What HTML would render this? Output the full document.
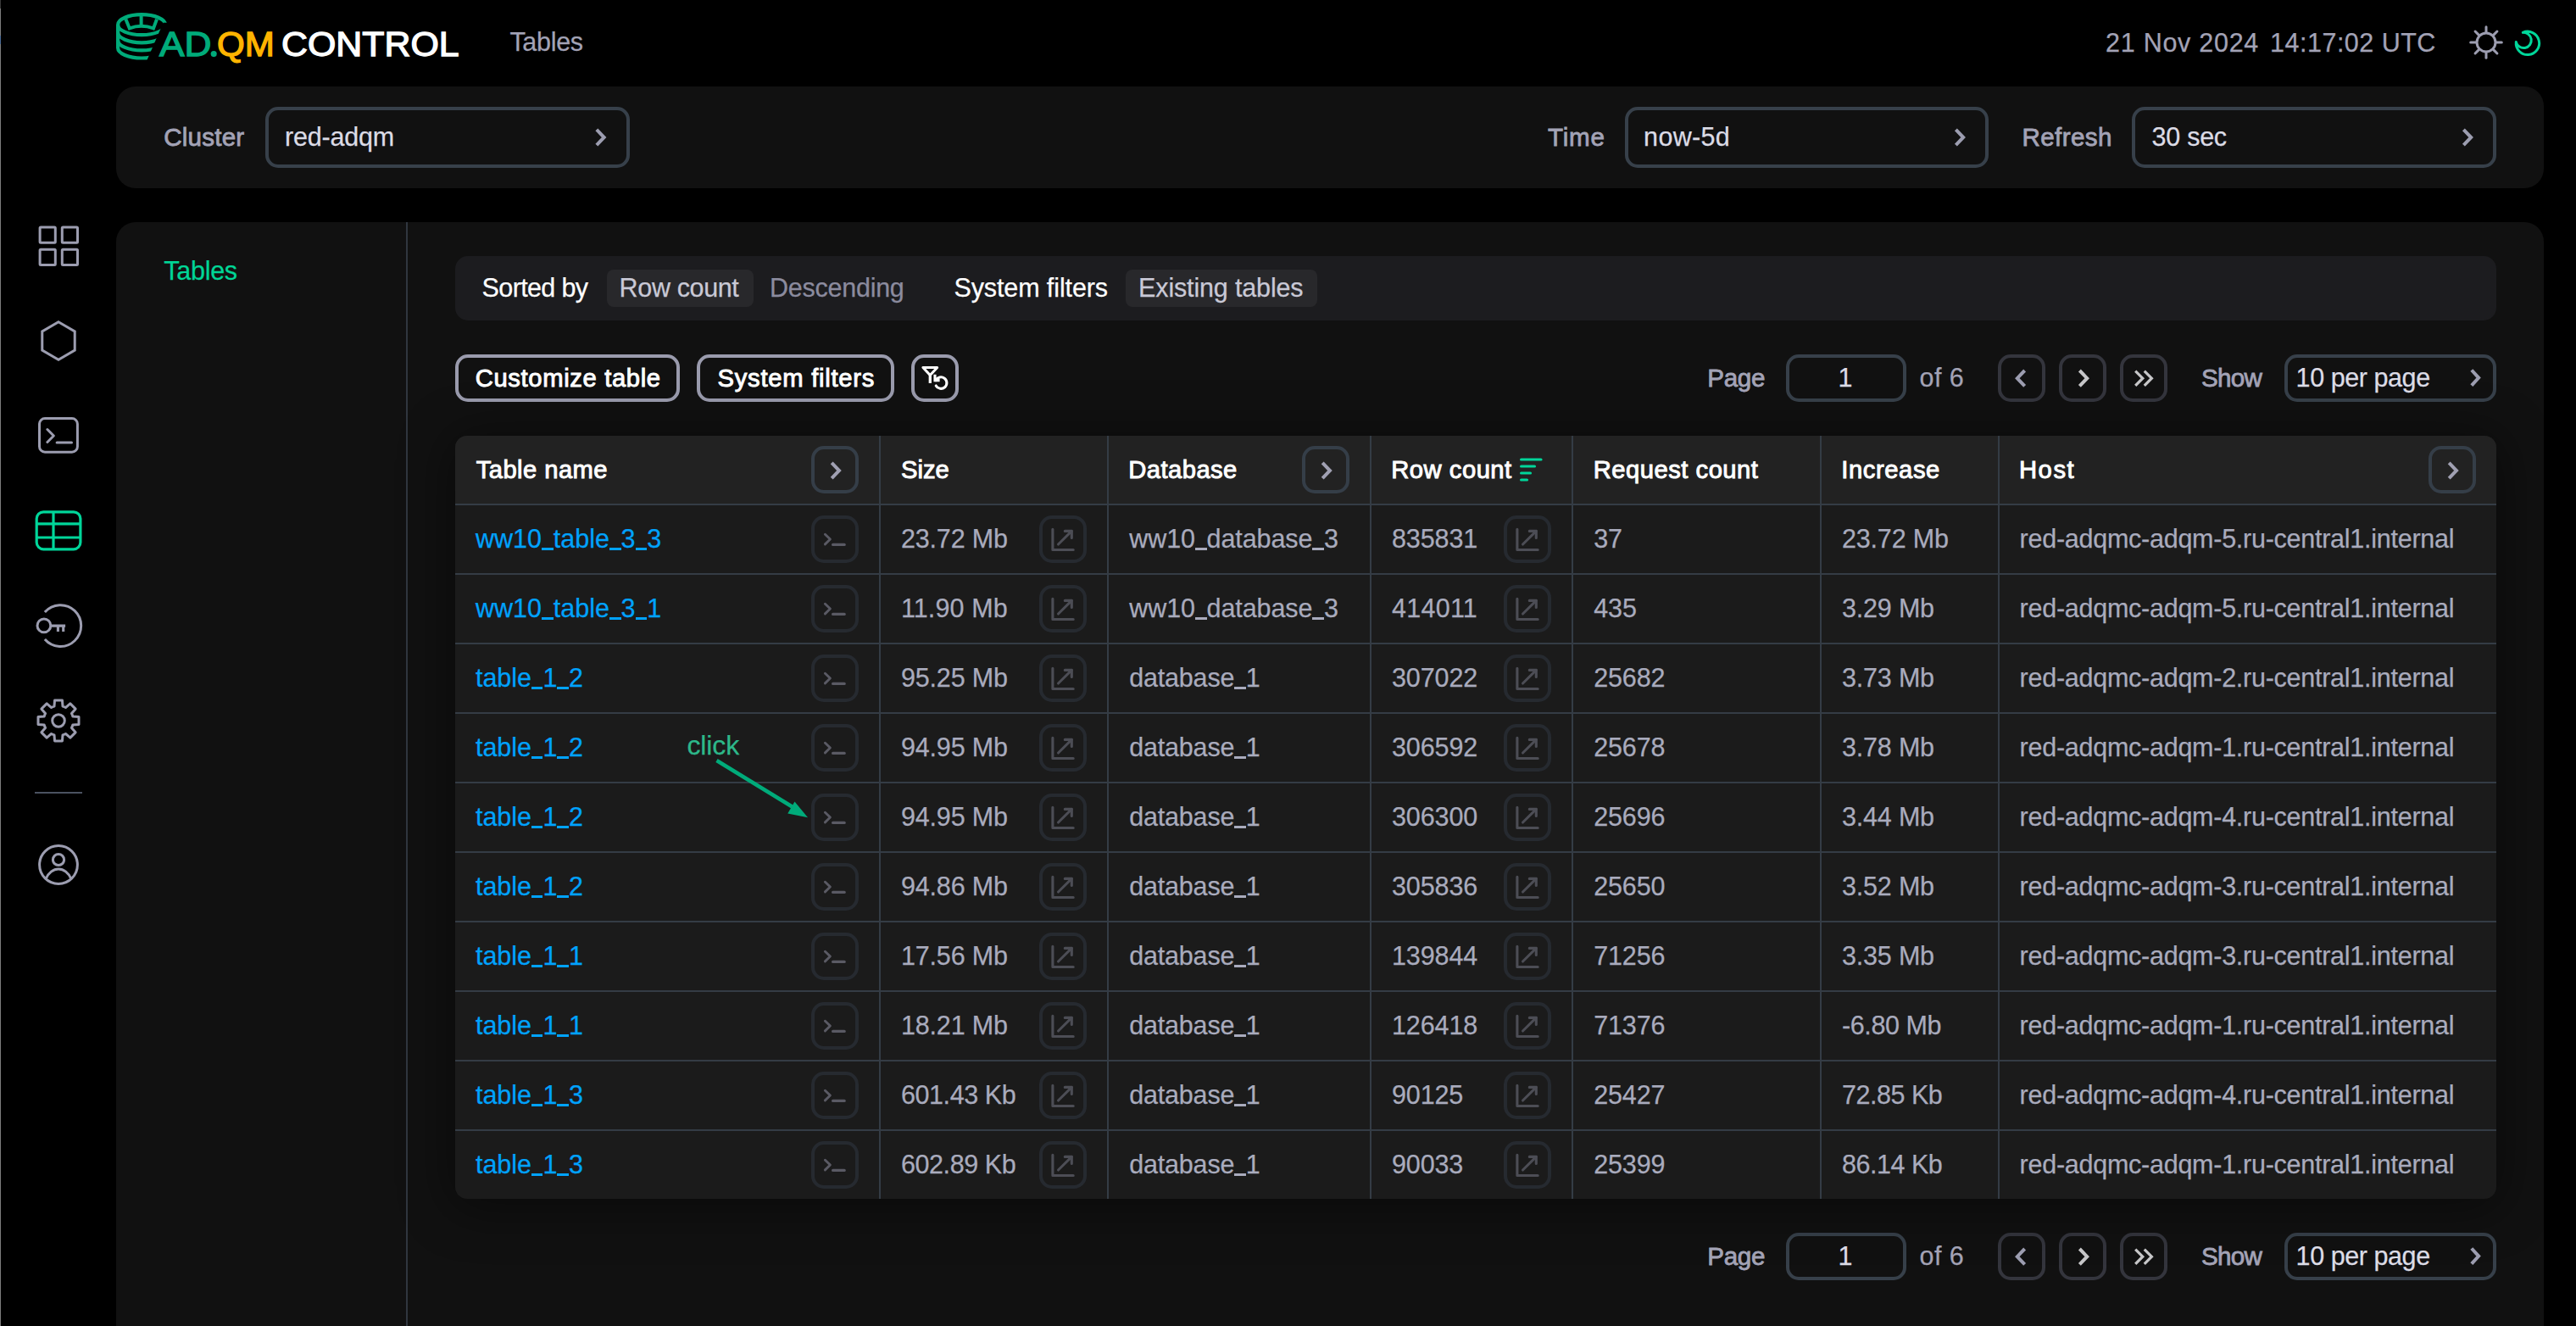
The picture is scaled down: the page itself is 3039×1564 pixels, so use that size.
<!DOCTYPE html>
<html><head><meta charset="utf-8"><title>ADQM Control - Tables</title>
<style>
html,body{margin:0;padding:0;background:#000000;overflow:hidden;}
body,#root{width:3039px;height:1564px;position:relative;overflow:hidden;font-family:"Liberation Sans", sans-serif;}
.b{position:absolute;box-sizing:border-box;}
.t{position:absolute;white-space:nowrap;line-height:40px;font-family:"Liberation Sans",sans-serif;}.u{display:inline-block;width:13.6px;height:2.3px;background:currentColor;position:relative;top:2.6px;}
svg.ic{position:absolute;left:0;top:0;}
</style></head><body><div id="root">
<div class="b" style="left:0px;top:0px;width:1px;height:10px;background:#3a3a3a;"></div>
<div class="b" style="left:0px;top:10px;width:1px;height:1554px;background:#7d7d7d;"></div>
<div class="b" style="left:0px;top:42px;width:1px;height:10px;background:#4a6a96;"></div>
<div class="b" style="left:137px;top:102px;width:2864px;height:120px;background:#111111;border-radius:23px;"></div>
<div class="b" style="left:137px;top:262px;width:2864px;height:1302px;background:#111111;border-radius:23px 23px 0 0;"></div>
<div class="b" style="left:479px;top:262px;width:2px;height:1302px;background:#30363f;"></div>
<div class="b" style="left:313px;top:126px;width:429.5px;height:72px;border-radius:15px;border:4px solid #37404a;"></div>
<div class="b" style="left:1917px;top:126px;width:429px;height:72px;border-radius:15px;border:4px solid #37404a;"></div>
<div class="b" style="left:2515px;top:126px;width:430px;height:72px;border-radius:15px;border:4px solid #37404a;"></div>
<div class="b" style="left:537px;top:302px;width:2408px;height:76px;background:#1c1c1f;border-radius:15px;"></div>
<div class="b" style="left:716.25px;top:318px;width:172.5px;height:44px;background:#28282b;border-radius:8px;"></div>
<div class="b" style="left:1328px;top:318px;width:225.75px;height:44px;background:#28282b;border-radius:8px;"></div>
<div class="b" style="left:537px;top:418px;width:265px;height:56px;border-radius:15px;border:4px solid #9a9bad;"></div>
<div class="b" style="left:822px;top:418px;width:233px;height:56px;border-radius:15px;border:4px solid #9a9bad;"></div>
<div class="b" style="left:1075px;top:418px;width:56px;height:56px;border-radius:15px;border:4px solid #9a9bad;"></div>
<div class="b" style="left:2107px;top:418px;width:142px;height:56px;border-radius:15px;border:4px solid #37404a;"></div>
<div class="b" style="left:2357px;top:418px;width:56px;height:56px;border-radius:15px;border:4px solid #34353d;"></div>
<div class="b" style="left:2429px;top:418px;width:56px;height:56px;border-radius:15px;border:4px solid #34353d;"></div>
<div class="b" style="left:2501px;top:418px;width:56px;height:56px;border-radius:15px;border:4px solid #34353d;"></div>
<div class="b" style="left:2695px;top:418px;width:250px;height:56px;border-radius:15px;border:4px solid #37404a;"></div>
<div class="b" style="left:2107px;top:1454px;width:142px;height:56px;border-radius:15px;border:4px solid #37404a;"></div>
<div class="b" style="left:2357px;top:1454px;width:56px;height:56px;border-radius:15px;border:4px solid #34353d;"></div>
<div class="b" style="left:2429px;top:1454px;width:56px;height:56px;border-radius:15px;border:4px solid #34353d;"></div>
<div class="b" style="left:2501px;top:1454px;width:56px;height:56px;border-radius:15px;border:4px solid #34353d;"></div>
<div class="b" style="left:2695px;top:1454px;width:250px;height:56px;border-radius:15px;border:4px solid #37404a;"></div>
<div class="b" style="left:537px;top:514px;width:2408px;height:900px;background:#1b1b1b;border-radius:14px;box-shadow:0 6px 60px 6px rgba(0,0,0,.42);"></div>
<div class="b" style="left:537px;top:514px;width:2408px;height:80px;background:#222222;border-radius:14px 14px 0 0;"></div>
<div class="b" style="left:537px;top:594px;width:2408px;height:2px;background:#343c45;"></div>
<div class="b" style="left:537px;top:676px;width:2408px;height:2px;background:#343c45;"></div>
<div class="b" style="left:537px;top:758px;width:2408px;height:2px;background:#343c45;"></div>
<div class="b" style="left:537px;top:840px;width:2408px;height:2px;background:#343c45;"></div>
<div class="b" style="left:537px;top:922px;width:2408px;height:2px;background:#343c45;"></div>
<div class="b" style="left:537px;top:1004px;width:2408px;height:2px;background:#343c45;"></div>
<div class="b" style="left:537px;top:1086px;width:2408px;height:2px;background:#343c45;"></div>
<div class="b" style="left:537px;top:1168px;width:2408px;height:2px;background:#343c45;"></div>
<div class="b" style="left:537px;top:1250px;width:2408px;height:2px;background:#343c45;"></div>
<div class="b" style="left:537px;top:1332px;width:2408px;height:2px;background:#343c45;"></div>
<div class="b" style="left:1037px;top:514px;width:2px;height:900px;background:#343c45;"></div>
<div class="b" style="left:1306px;top:514px;width:2px;height:900px;background:#343c45;"></div>
<div class="b" style="left:1616px;top:514px;width:2px;height:900px;background:#343c45;"></div>
<div class="b" style="left:1854px;top:514px;width:2px;height:900px;background:#343c45;"></div>
<div class="b" style="left:2147px;top:514px;width:2px;height:900px;background:#343c45;"></div>
<div class="b" style="left:2357px;top:514px;width:2px;height:900px;background:#343c45;"></div>
<div class="b" style="left:957px;top:526px;width:56px;height:56px;border-radius:15px;border:4px solid #353e48;"></div>
<div class="b" style="left:1536px;top:526px;width:56px;height:56px;border-radius:15px;border:4px solid #353e48;"></div>
<div class="b" style="left:2865px;top:526px;width:56px;height:56px;border-radius:15px;border:4px solid #353e48;"></div>
<div class="b" style="left:957px;top:608px;width:56px;height:56px;border-radius:15px;border:4px solid #262a30;"></div>
<div class="b" style="left:1226px;top:608px;width:56px;height:56px;border-radius:15px;border:4px solid #262a30;"></div>
<div class="b" style="left:1774px;top:608px;width:56px;height:56px;border-radius:15px;border:4px solid #262a30;"></div>
<div class="b" style="left:957px;top:690px;width:56px;height:56px;border-radius:15px;border:4px solid #262a30;"></div>
<div class="b" style="left:1226px;top:690px;width:56px;height:56px;border-radius:15px;border:4px solid #262a30;"></div>
<div class="b" style="left:1774px;top:690px;width:56px;height:56px;border-radius:15px;border:4px solid #262a30;"></div>
<div class="b" style="left:957px;top:772px;width:56px;height:56px;border-radius:15px;border:4px solid #262a30;"></div>
<div class="b" style="left:1226px;top:772px;width:56px;height:56px;border-radius:15px;border:4px solid #262a30;"></div>
<div class="b" style="left:1774px;top:772px;width:56px;height:56px;border-radius:15px;border:4px solid #262a30;"></div>
<div class="b" style="left:957px;top:854px;width:56px;height:56px;border-radius:15px;border:4px solid #262a30;"></div>
<div class="b" style="left:1226px;top:854px;width:56px;height:56px;border-radius:15px;border:4px solid #262a30;"></div>
<div class="b" style="left:1774px;top:854px;width:56px;height:56px;border-radius:15px;border:4px solid #262a30;"></div>
<div class="b" style="left:957px;top:936px;width:56px;height:56px;border-radius:15px;border:4px solid #262a30;"></div>
<div class="b" style="left:1226px;top:936px;width:56px;height:56px;border-radius:15px;border:4px solid #262a30;"></div>
<div class="b" style="left:1774px;top:936px;width:56px;height:56px;border-radius:15px;border:4px solid #262a30;"></div>
<div class="b" style="left:957px;top:1018px;width:56px;height:56px;border-radius:15px;border:4px solid #262a30;"></div>
<div class="b" style="left:1226px;top:1018px;width:56px;height:56px;border-radius:15px;border:4px solid #262a30;"></div>
<div class="b" style="left:1774px;top:1018px;width:56px;height:56px;border-radius:15px;border:4px solid #262a30;"></div>
<div class="b" style="left:957px;top:1100px;width:56px;height:56px;border-radius:15px;border:4px solid #262a30;"></div>
<div class="b" style="left:1226px;top:1100px;width:56px;height:56px;border-radius:15px;border:4px solid #262a30;"></div>
<div class="b" style="left:1774px;top:1100px;width:56px;height:56px;border-radius:15px;border:4px solid #262a30;"></div>
<div class="b" style="left:957px;top:1182px;width:56px;height:56px;border-radius:15px;border:4px solid #262a30;"></div>
<div class="b" style="left:1226px;top:1182px;width:56px;height:56px;border-radius:15px;border:4px solid #262a30;"></div>
<div class="b" style="left:1774px;top:1182px;width:56px;height:56px;border-radius:15px;border:4px solid #262a30;"></div>
<div class="b" style="left:957px;top:1264px;width:56px;height:56px;border-radius:15px;border:4px solid #262a30;"></div>
<div class="b" style="left:1226px;top:1264px;width:56px;height:56px;border-radius:15px;border:4px solid #262a30;"></div>
<div class="b" style="left:1774px;top:1264px;width:56px;height:56px;border-radius:15px;border:4px solid #262a30;"></div>
<div class="b" style="left:957px;top:1346px;width:56px;height:56px;border-radius:15px;border:4px solid #262a30;"></div>
<div class="b" style="left:1226px;top:1346px;width:56px;height:56px;border-radius:15px;border:4px solid #262a30;"></div>
<div class="b" style="left:1774px;top:1346px;width:56px;height:56px;border-radius:15px;border:4px solid #262a30;"></div>
<svg class="ic" width="3039" height="1564" viewBox="0 0 3039 1564">
<defs>
<clipPath id="lgc"><path d="M130 0H205V26.7H192.6L172 74.3H130Z"/></clipPath>
</defs>
<g fill="none" stroke="#00ab7a" stroke-width="4.2">
<g clip-path="url(#lgc)">
<ellipse cx="167.1" cy="29.2" rx="28" ry="12"/>
<path d="M139.1 38.30A28 12 0 0 0 195.1 38.30"/>
<path d="M139.1 47.40A28 12 0 0 0 195.1 47.40"/>
<path d="M139.1 29.2V56.5A28 12 0 0 0 195.1 56.5"/>
</g>
<path d="M148.3 22.6L152.8 33.4Q166.6 28.2 181 33.4L185 22.6" stroke-width="4" stroke-linejoin="miter"/>
<path d="M166.6 18.5V30.2" stroke-width="4"/>
</g>
<circle cx="252.2" cy="63.6" r="3.55" fill="#00ab7a"/>
<path d="M703.88 152.80L712.68 162.00L703.88 171.20" stroke="#9c9db0" stroke-width="4" fill="none"/>
<path d="M2307.39 152.80L2316.19 162.00L2307.39 171.20" stroke="#9c9db0" stroke-width="4" fill="none"/>
<path d="M2906.39 152.80L2915.19 162.00L2906.39 171.20" stroke="#9c9db0" stroke-width="4" fill="none"/>
<path d="M2915.84 436.50L2924.14 445.60L2915.84 454.70" stroke="#9c9db0" stroke-width="4" fill="none"/>
<path d="M2915.84 1472.50L2924.14 1481.60L2915.84 1490.70" stroke="#9c9db0" stroke-width="4" fill="none"/>
<g fill="none" stroke="#9c9db0" stroke-width="3" stroke-linecap="round">
<circle cx="2933" cy="50" r="11"/>
<path d="M2945.50 50.00L2951.30 50.00"/>
<path d="M2941.84 58.84L2945.94 62.94"/>
<path d="M2933.00 62.50L2933.00 68.30"/>
<path d="M2924.16 58.84L2920.06 62.94"/>
<path d="M2920.50 50.00L2914.70 50.00"/>
<path d="M2924.16 41.16L2920.06 37.06"/>
<path d="M2933.00 37.50L2933.00 31.70"/>
<path d="M2941.84 41.16L2945.94 37.06"/>
</g>
<path d="M2976.3 38.4A13.7 13.7 0 1 1 2968.3 49.5A9.1 9.1 0 1 0 2976.3 38.4Z" fill="none" stroke="#00d69a" stroke-width="3" stroke-linejoin="round"/>
<g fill="none" stroke="#9c9db0" stroke-width="3">
<rect x="47.1" y="268" width="18.2" height="18.2" rx="1"/>
<rect x="47.1" y="294.3" width="18.2" height="18.2" rx="1"/>
<rect x="73.3" y="268" width="18.2" height="18.2" rx="1"/>
<rect x="73.3" y="294.3" width="18.2" height="18.2" rx="1"/>
<path d="M69.00 379.80L88.23 390.90L88.23 413.10L69.00 424.20L49.77 413.10L49.77 390.90Z"/>
<rect x="46.5" y="493.6" width="44.9" height="39.6" rx="6.5"/>
<path d="M55.9 506.5L63.3 514L55.9 521.5" stroke-linecap="round" stroke-linejoin="round"/>
<path d="M67.1 522H84.5" stroke-linecap="round"/>
<path d="M52.85 722.1A24.4 24.4 0 1 1 52.85 754.1" stroke-linecap="butt"/>
<circle cx="51.9" cy="737.9" r="7.9"/>
<path d="M59.8 738.1H77.1M68.4 738.1V745M74.7 738.1V745" stroke-width="3.1"/>
<path d="M64.00 833.12L64.55 826.01L73.45 826.01L74.00 833.12A17.6 17.6 0 0 1 77.40 834.53L82.82 829.89L89.11 836.18L84.47 841.60A17.6 17.6 0 0 1 85.88 845.00L92.99 845.55L92.99 854.45L85.88 855.00A17.6 17.6 0 0 1 84.47 858.40L89.11 863.82L82.82 870.11L77.40 865.47A17.6 17.6 0 0 1 74.00 866.88L73.45 873.99L64.55 873.99L64.00 866.88A17.6 17.6 0 0 1 60.60 865.47L55.18 870.11L48.89 863.82L53.53 858.40A17.6 17.6 0 0 1 52.12 855.00L45.01 854.45L45.01 845.55L52.12 845.00A17.6 17.6 0 0 1 53.53 841.60L48.89 836.18L55.18 829.89L60.60 834.53A17.6 17.6 0 0 1 64.00 833.12Z" stroke-linejoin="round"/>
<circle cx="69" cy="850" r="7.3"/>
<circle cx="69" cy="1020" r="22.4"/>
<circle cx="69" cy="1014" r="6.6"/>
<path d="M54 1036.8C57 1029.5 63 1025 69 1025C75 1025 81 1029.5 84 1036.8"/>
</g>
<rect x="41" y="934" width="56" height="2" fill="#4a5260"/>
<g fill="none" stroke="#00d69a" stroke-width="3.2">
<rect x="43.2" y="603.85" width="51.7" height="43.95" rx="8"/>
<path d="M63 603.85V647.8M43.2 617.9H94.9M43.2 634H94.9"/>
</g>
<g fill="none" stroke="#ffffff" stroke-width="3.3">
<path d="M1088.9 433.4H1105.7L1097.3 442.6Z" stroke-linejoin="round" stroke-width="3"/>
<path d="M1097.3 442V451.9"/>
<path d="M1104 448.6A6.8 6.8 0 1 1 1104.2 455" stroke-linecap="round" stroke-width="3.1"/>
<path d="M1103 441.8V448.6H1108.6" stroke-width="3.1"/>
</g>
<path d="M2388.61 437.00L2379.81 446.20L2388.61 455.40" stroke="#9c9db0" stroke-width="4" fill="none"/>
<path d="M2453.39 437.00L2462.19 446.20L2453.39 455.40" stroke="#c6c6c8" stroke-width="4" fill="none"/>
<path d="M2519.20 437.60L2527.80 446.20L2519.20 454.80" stroke="#c6c6c8" stroke-width="3.2" fill="none"/>
<path d="M2529.80 437.60L2538.40 446.20L2529.80 454.80" stroke="#c6c6c8" stroke-width="3.2" fill="none"/>
<path d="M2388.61 1473.00L2379.81 1482.20L2388.61 1491.40" stroke="#9c9db0" stroke-width="4" fill="none"/>
<path d="M2453.39 1473.00L2462.19 1482.20L2453.39 1491.40" stroke="#c6c6c8" stroke-width="4" fill="none"/>
<path d="M2519.20 1473.60L2527.80 1482.20L2519.20 1490.80" stroke="#c6c6c8" stroke-width="3.2" fill="none"/>
<path d="M2529.80 1473.60L2538.40 1482.20L2529.80 1490.80" stroke="#c6c6c8" stroke-width="3.2" fill="none"/>
<path d="M981.18 545.80L989.98 555.00L981.18 564.20" stroke="#a0a0b2" stroke-width="4" fill="none"/>
<path d="M1560.18 545.80L1568.98 555.00L1560.18 564.20" stroke="#a0a0b2" stroke-width="4" fill="none"/>
<path d="M2889.19 545.80L2897.99 555.00L2889.19 564.20" stroke="#a0a0b2" stroke-width="4" fill="none"/>
<g stroke="#00d69a" stroke-width="3.2" stroke-linecap="round">
<path d="M1794.6 542H1818"/>
<path d="M1794.6 550H1810.5"/>
<path d="M1794.6 558H1805.5"/>
<path d="M1794.6 566H1801.5"/>
</g>
<g transform="translate(957 608)" fill="none" stroke="#5a5a64" stroke-linecap="round" stroke-linejoin="round"><path d="M16.4 22.2L22.4 28.05L16.4 33.9" stroke-width="2.9"/><path d="M25.6 34.4H39.2" stroke-width="3.2"/></g>
<g transform="translate(1226 608)" fill="none" stroke="#4c4d55" stroke-width="3.1" stroke-linecap="round" stroke-linejoin="round"><path d="M15.9 16.2V40.5H40.2"/><path d="M22.5 34L38.3 18.4"/><path d="M30.3 18.4H38.3V26.4"/></g>
<g transform="translate(1774 608)" fill="none" stroke="#4c4d55" stroke-width="3.1" stroke-linecap="round" stroke-linejoin="round"><path d="M15.9 16.2V40.5H40.2"/><path d="M22.5 34L38.3 18.4"/><path d="M30.3 18.4H38.3V26.4"/></g>
<g transform="translate(957 690)" fill="none" stroke="#5a5a64" stroke-linecap="round" stroke-linejoin="round"><path d="M16.4 22.2L22.4 28.05L16.4 33.9" stroke-width="2.9"/><path d="M25.6 34.4H39.2" stroke-width="3.2"/></g>
<g transform="translate(1226 690)" fill="none" stroke="#4c4d55" stroke-width="3.1" stroke-linecap="round" stroke-linejoin="round"><path d="M15.9 16.2V40.5H40.2"/><path d="M22.5 34L38.3 18.4"/><path d="M30.3 18.4H38.3V26.4"/></g>
<g transform="translate(1774 690)" fill="none" stroke="#4c4d55" stroke-width="3.1" stroke-linecap="round" stroke-linejoin="round"><path d="M15.9 16.2V40.5H40.2"/><path d="M22.5 34L38.3 18.4"/><path d="M30.3 18.4H38.3V26.4"/></g>
<g transform="translate(957 772)" fill="none" stroke="#5a5a64" stroke-linecap="round" stroke-linejoin="round"><path d="M16.4 22.2L22.4 28.05L16.4 33.9" stroke-width="2.9"/><path d="M25.6 34.4H39.2" stroke-width="3.2"/></g>
<g transform="translate(1226 772)" fill="none" stroke="#4c4d55" stroke-width="3.1" stroke-linecap="round" stroke-linejoin="round"><path d="M15.9 16.2V40.5H40.2"/><path d="M22.5 34L38.3 18.4"/><path d="M30.3 18.4H38.3V26.4"/></g>
<g transform="translate(1774 772)" fill="none" stroke="#4c4d55" stroke-width="3.1" stroke-linecap="round" stroke-linejoin="round"><path d="M15.9 16.2V40.5H40.2"/><path d="M22.5 34L38.3 18.4"/><path d="M30.3 18.4H38.3V26.4"/></g>
<g transform="translate(957 854)" fill="none" stroke="#5a5a64" stroke-linecap="round" stroke-linejoin="round"><path d="M16.4 22.2L22.4 28.05L16.4 33.9" stroke-width="2.9"/><path d="M25.6 34.4H39.2" stroke-width="3.2"/></g>
<g transform="translate(1226 854)" fill="none" stroke="#4c4d55" stroke-width="3.1" stroke-linecap="round" stroke-linejoin="round"><path d="M15.9 16.2V40.5H40.2"/><path d="M22.5 34L38.3 18.4"/><path d="M30.3 18.4H38.3V26.4"/></g>
<g transform="translate(1774 854)" fill="none" stroke="#4c4d55" stroke-width="3.1" stroke-linecap="round" stroke-linejoin="round"><path d="M15.9 16.2V40.5H40.2"/><path d="M22.5 34L38.3 18.4"/><path d="M30.3 18.4H38.3V26.4"/></g>
<g transform="translate(957 936)" fill="none" stroke="#5a5a64" stroke-linecap="round" stroke-linejoin="round"><path d="M16.4 22.2L22.4 28.05L16.4 33.9" stroke-width="2.9"/><path d="M25.6 34.4H39.2" stroke-width="3.2"/></g>
<g transform="translate(1226 936)" fill="none" stroke="#4c4d55" stroke-width="3.1" stroke-linecap="round" stroke-linejoin="round"><path d="M15.9 16.2V40.5H40.2"/><path d="M22.5 34L38.3 18.4"/><path d="M30.3 18.4H38.3V26.4"/></g>
<g transform="translate(1774 936)" fill="none" stroke="#4c4d55" stroke-width="3.1" stroke-linecap="round" stroke-linejoin="round"><path d="M15.9 16.2V40.5H40.2"/><path d="M22.5 34L38.3 18.4"/><path d="M30.3 18.4H38.3V26.4"/></g>
<g transform="translate(957 1018)" fill="none" stroke="#5a5a64" stroke-linecap="round" stroke-linejoin="round"><path d="M16.4 22.2L22.4 28.05L16.4 33.9" stroke-width="2.9"/><path d="M25.6 34.4H39.2" stroke-width="3.2"/></g>
<g transform="translate(1226 1018)" fill="none" stroke="#4c4d55" stroke-width="3.1" stroke-linecap="round" stroke-linejoin="round"><path d="M15.9 16.2V40.5H40.2"/><path d="M22.5 34L38.3 18.4"/><path d="M30.3 18.4H38.3V26.4"/></g>
<g transform="translate(1774 1018)" fill="none" stroke="#4c4d55" stroke-width="3.1" stroke-linecap="round" stroke-linejoin="round"><path d="M15.9 16.2V40.5H40.2"/><path d="M22.5 34L38.3 18.4"/><path d="M30.3 18.4H38.3V26.4"/></g>
<g transform="translate(957 1100)" fill="none" stroke="#5a5a64" stroke-linecap="round" stroke-linejoin="round"><path d="M16.4 22.2L22.4 28.05L16.4 33.9" stroke-width="2.9"/><path d="M25.6 34.4H39.2" stroke-width="3.2"/></g>
<g transform="translate(1226 1100)" fill="none" stroke="#4c4d55" stroke-width="3.1" stroke-linecap="round" stroke-linejoin="round"><path d="M15.9 16.2V40.5H40.2"/><path d="M22.5 34L38.3 18.4"/><path d="M30.3 18.4H38.3V26.4"/></g>
<g transform="translate(1774 1100)" fill="none" stroke="#4c4d55" stroke-width="3.1" stroke-linecap="round" stroke-linejoin="round"><path d="M15.9 16.2V40.5H40.2"/><path d="M22.5 34L38.3 18.4"/><path d="M30.3 18.4H38.3V26.4"/></g>
<g transform="translate(957 1182)" fill="none" stroke="#5a5a64" stroke-linecap="round" stroke-linejoin="round"><path d="M16.4 22.2L22.4 28.05L16.4 33.9" stroke-width="2.9"/><path d="M25.6 34.4H39.2" stroke-width="3.2"/></g>
<g transform="translate(1226 1182)" fill="none" stroke="#4c4d55" stroke-width="3.1" stroke-linecap="round" stroke-linejoin="round"><path d="M15.9 16.2V40.5H40.2"/><path d="M22.5 34L38.3 18.4"/><path d="M30.3 18.4H38.3V26.4"/></g>
<g transform="translate(1774 1182)" fill="none" stroke="#4c4d55" stroke-width="3.1" stroke-linecap="round" stroke-linejoin="round"><path d="M15.9 16.2V40.5H40.2"/><path d="M22.5 34L38.3 18.4"/><path d="M30.3 18.4H38.3V26.4"/></g>
<g transform="translate(957 1264)" fill="none" stroke="#5a5a64" stroke-linecap="round" stroke-linejoin="round"><path d="M16.4 22.2L22.4 28.05L16.4 33.9" stroke-width="2.9"/><path d="M25.6 34.4H39.2" stroke-width="3.2"/></g>
<g transform="translate(1226 1264)" fill="none" stroke="#4c4d55" stroke-width="3.1" stroke-linecap="round" stroke-linejoin="round"><path d="M15.9 16.2V40.5H40.2"/><path d="M22.5 34L38.3 18.4"/><path d="M30.3 18.4H38.3V26.4"/></g>
<g transform="translate(1774 1264)" fill="none" stroke="#4c4d55" stroke-width="3.1" stroke-linecap="round" stroke-linejoin="round"><path d="M15.9 16.2V40.5H40.2"/><path d="M22.5 34L38.3 18.4"/><path d="M30.3 18.4H38.3V26.4"/></g>
<g transform="translate(957 1346)" fill="none" stroke="#5a5a64" stroke-linecap="round" stroke-linejoin="round"><path d="M16.4 22.2L22.4 28.05L16.4 33.9" stroke-width="2.9"/><path d="M25.6 34.4H39.2" stroke-width="3.2"/></g>
<g transform="translate(1226 1346)" fill="none" stroke="#4c4d55" stroke-width="3.1" stroke-linecap="round" stroke-linejoin="round"><path d="M15.9 16.2V40.5H40.2"/><path d="M22.5 34L38.3 18.4"/><path d="M30.3 18.4H38.3V26.4"/></g>
<g transform="translate(1774 1346)" fill="none" stroke="#4c4d55" stroke-width="3.1" stroke-linecap="round" stroke-linejoin="round"><path d="M15.9 16.2V40.5H40.2"/><path d="M22.5 34L38.3 18.4"/><path d="M30.3 18.4H38.3V26.4"/></g>
<path d="M845.5 897L934.5 951.5" stroke="#00ab7a" stroke-width="4.4" fill="none"/>
<path d="M953 964.25L937.5 945.5L929.25 959.5Z" fill="#00ab7a"/>
</svg>
<span class="t" style="left:187.72px;top:31.80px;font-size:40px;color:#00ab7a;-webkit-text-stroke:1.3px #00ab7a;transform:scaleX(1.1056);transform-origin:0 0;">AD</span>
<span class="t" style="left:255.93px;top:31.80px;font-size:40px;color:#ffb400;-webkit-text-stroke:1.3px #ffb400;transform:scaleX(1.0526);transform-origin:0 0;">QM</span>
<span class="t" style="left:331.55px;top:31.80px;font-size:40px;color:#ffffff;-webkit-text-stroke:1.3px #ffffff;transform:scaleX(1.0716);transform-origin:0 0;">CONTROL</span>
<span class="t" style="left:601.42px;top:29.30px;font-size:30.5px;color:#a3a3b6;letter-spacing:-0.294px;-webkit-text-stroke:0.25px #a3a3b6;">Tables</span>
<span class="t" style="left:2484.12px;top:30.00px;font-size:30.5px;color:#a3a3b6;letter-spacing:0.724px;-webkit-text-stroke:0.25px #a3a3b6;">21 Nov 2024</span>
<span class="t" style="left:2678.12px;top:30.00px;font-size:30.5px;color:#a3a3b6;letter-spacing:0.490px;-webkit-text-stroke:0.25px #a3a3b6;">14:17:02 UTC</span>
<span class="t" style="left:193.20px;top:142.00px;font-size:29.6px;color:#a3a3b6;letter-spacing:0.217px;-webkit-text-stroke:0.8px #a3a3b6;">Cluster</span>
<span class="t" style="left:336.12px;top:141.00px;font-size:30.5px;color:#dcdce6;letter-spacing:-0.227px;-webkit-text-stroke:0.25px #dcdce6;">red-adqm</span>
<span class="t" style="left:1825.90px;top:142.00px;font-size:29.6px;color:#a3a3b6;letter-spacing:0.829px;-webkit-text-stroke:0.8px #a3a3b6;">Time</span>
<span class="t" style="left:1939.12px;top:141.00px;font-size:30.5px;color:#dcdce6;letter-spacing:0.333px;-webkit-text-stroke:0.25px #dcdce6;">now-5d</span>
<span class="t" style="left:2385.40px;top:142.00px;font-size:29.6px;color:#a3a3b6;letter-spacing:0.422px;-webkit-text-stroke:0.8px #a3a3b6;">Refresh</span>
<span class="t" style="left:2538.62px;top:141.00px;font-size:30.5px;color:#dcdce6;letter-spacing:-0.275px;-webkit-text-stroke:0.25px #dcdce6;">30 sec</span>
<span class="t" style="left:193.32px;top:299.00px;font-size:30.5px;color:#00d696;letter-spacing:-0.274px;-webkit-text-stroke:0.25px #00d696;">Tables</span>
<span class="t" style="left:568.62px;top:318.60px;font-size:30.5px;color:#ffffff;letter-spacing:-0.633px;-webkit-text-stroke:0.25px #ffffff;">Sorted by</span>
<span class="t" style="left:730.62px;top:318.60px;font-size:30.5px;color:#c9c9d6;letter-spacing:-0.361px;-webkit-text-stroke:0.25px #c9c9d6;">Row count</span>
<span class="t" style="left:908.12px;top:318.60px;font-size:30.5px;color:#8b8b9e;letter-spacing:-0.263px;-webkit-text-stroke:0.25px #8b8b9e;">Descending</span>
<span class="t" style="left:1125.42px;top:318.60px;font-size:30.5px;color:#ffffff;letter-spacing:-0.102px;-webkit-text-stroke:0.25px #ffffff;">System filters</span>
<span class="t" style="left:1343.12px;top:318.60px;font-size:30.5px;color:#c9c9d6;letter-spacing:-0.155px;-webkit-text-stroke:0.25px #c9c9d6;">Existing tables</span>
<span class="t" style="left:560.77px;top:425.60px;font-size:29.2px;color:#ffffff;letter-spacing:0.643px;-webkit-text-stroke:0.95px #ffffff;">Customize table</span>
<span class="t" style="left:846.48px;top:425.60px;font-size:29.2px;color:#ffffff;letter-spacing:0.753px;-webkit-text-stroke:0.95px #ffffff;">System filters</span>
<span class="t" style="left:2014.20px;top:425.60px;font-size:29.6px;color:#a3a3b6;letter-spacing:-0.255px;-webkit-text-stroke:0.8px #a3a3b6;">Page</span>
<span class="t" style="left:2168.50px;top:424.60px;font-size:30.5px;color:#dcdce6;-webkit-text-stroke:0.25px #dcdce6;">1</span>
<span class="t" style="left:2264.62px;top:424.60px;font-size:30.5px;color:#a3a3b6;letter-spacing:0.379px;-webkit-text-stroke:0.25px #a3a3b6;">of 6</span>
<span class="t" style="left:2596.90px;top:425.60px;font-size:29.6px;color:#a3a3b6;letter-spacing:-0.653px;-webkit-text-stroke:0.8px #a3a3b6;">Show</span>
<span class="t" style="left:2708.62px;top:424.60px;font-size:30.5px;color:#dcdce6;letter-spacing:-0.430px;-webkit-text-stroke:0.25px #dcdce6;">10 per page</span>
<span class="t" style="left:2014.20px;top:1461.60px;font-size:29.6px;color:#a3a3b6;letter-spacing:-0.255px;-webkit-text-stroke:0.8px #a3a3b6;">Page</span>
<span class="t" style="left:2168.50px;top:1460.60px;font-size:30.5px;color:#dcdce6;-webkit-text-stroke:0.25px #dcdce6;">1</span>
<span class="t" style="left:2264.62px;top:1460.60px;font-size:30.5px;color:#a3a3b6;letter-spacing:0.379px;-webkit-text-stroke:0.25px #a3a3b6;">of 6</span>
<span class="t" style="left:2596.90px;top:1461.60px;font-size:29.6px;color:#a3a3b6;letter-spacing:-0.653px;-webkit-text-stroke:0.8px #a3a3b6;">Show</span>
<span class="t" style="left:2708.62px;top:1460.60px;font-size:30.5px;color:#dcdce6;letter-spacing:-0.430px;-webkit-text-stroke:0.25px #dcdce6;">10 per page</span>
<span class="t" style="left:561.77px;top:533.80px;font-size:29.2px;color:#ffffff;letter-spacing:0.431px;-webkit-text-stroke:0.95px #ffffff;">Table name</span>
<span class="t" style="left:1063.07px;top:533.80px;font-size:29.2px;color:#ffffff;-webkit-text-stroke:0.95px #ffffff;">Size</span>
<span class="t" style="left:1331.27px;top:533.80px;font-size:29.2px;color:#ffffff;letter-spacing:0.447px;-webkit-text-stroke:0.95px #ffffff;">Database</span>
<span class="t" style="left:1641.27px;top:533.80px;font-size:29.2px;color:#ffffff;letter-spacing:0.507px;-webkit-text-stroke:0.95px #ffffff;">Row count</span>
<span class="t" style="left:1879.77px;top:533.80px;font-size:29.2px;color:#ffffff;letter-spacing:0.494px;-webkit-text-stroke:0.95px #ffffff;">Request count</span>
<span class="t" style="left:2172.28px;top:533.80px;font-size:29.2px;color:#ffffff;letter-spacing:0.590px;-webkit-text-stroke:0.95px #ffffff;">Increase</span>
<span class="t" style="left:2381.97px;top:533.80px;font-size:29.2px;color:#ffffff;letter-spacing:1.548px;-webkit-text-stroke:0.95px #ffffff;">Host</span>
<span class="t" style="left:561.00px;top:615.00px;font-size:30.5px;color:#00a3ff;letter-spacing:0.032px;-webkit-text-stroke:0.25px #00a3ff;">ww10<i class="u"></i>table<i class="u"></i>3<i class="u"></i>3</span>
<span class="t" style="left:1063.00px;top:615.00px;font-size:30.5px;color:#a9abbd;letter-spacing:-0.181px;-webkit-text-stroke:0.25px #a9abbd;">23.72 Mb</span>
<span class="t" style="left:1332.30px;top:615.00px;font-size:30.5px;color:#a9abbd;letter-spacing:-0.082px;-webkit-text-stroke:0.25px #a9abbd;">ww10<i class="u"></i>database<i class="u"></i>3</span>
<span class="t" style="left:1642.00px;top:615.00px;font-size:30.5px;color:#a9abbd;letter-spacing:-0.118px;-webkit-text-stroke:0.25px #a9abbd;">835831</span>
<span class="t" style="left:1880.20px;top:615.00px;font-size:30.5px;color:#a9abbd;letter-spacing:-0.123px;-webkit-text-stroke:0.25px #a9abbd;">37</span>
<span class="t" style="left:2173.00px;top:615.00px;font-size:30.5px;color:#a9abbd;letter-spacing:-0.181px;-webkit-text-stroke:0.25px #a9abbd;">23.72 Mb</span>
<span class="t" style="left:2382.60px;top:615.00px;font-size:30.5px;color:#a9abbd;letter-spacing:-0.256px;-webkit-text-stroke:0.25px #a9abbd;">red-adqmc-adqm-5.ru-central1.internal</span>
<span class="t" style="left:561.00px;top:697.00px;font-size:30.5px;color:#00a3ff;letter-spacing:0.032px;-webkit-text-stroke:0.25px #00a3ff;">ww10<i class="u"></i>table<i class="u"></i>3<i class="u"></i>1</span>
<span class="t" style="left:1063.00px;top:697.00px;font-size:30.5px;color:#a9abbd;letter-spacing:0.103px;-webkit-text-stroke:0.25px #a9abbd;">11.90 Mb</span>
<span class="t" style="left:1332.30px;top:697.00px;font-size:30.5px;color:#a9abbd;letter-spacing:-0.082px;-webkit-text-stroke:0.25px #a9abbd;">ww10<i class="u"></i>database<i class="u"></i>3</span>
<span class="t" style="left:1642.00px;top:697.00px;font-size:30.5px;color:#a9abbd;letter-spacing:0.260px;-webkit-text-stroke:0.25px #a9abbd;">414011</span>
<span class="t" style="left:1880.20px;top:697.00px;font-size:30.5px;color:#a9abbd;letter-spacing:-0.118px;-webkit-text-stroke:0.25px #a9abbd;">435</span>
<span class="t" style="left:2173.00px;top:697.00px;font-size:30.5px;color:#a9abbd;letter-spacing:-0.191px;-webkit-text-stroke:0.25px #a9abbd;">3.29 Mb</span>
<span class="t" style="left:2382.60px;top:697.00px;font-size:30.5px;color:#a9abbd;letter-spacing:-0.256px;-webkit-text-stroke:0.25px #a9abbd;">red-adqmc-adqm-5.ru-central1.internal</span>
<span class="t" style="left:561.00px;top:779.00px;font-size:30.5px;color:#00a3ff;letter-spacing:-0.054px;-webkit-text-stroke:0.25px #00a3ff;">table<i class="u"></i>1<i class="u"></i>2</span>
<span class="t" style="left:1063.00px;top:779.00px;font-size:30.5px;color:#a9abbd;letter-spacing:-0.181px;-webkit-text-stroke:0.25px #a9abbd;">95.25 Mb</span>
<span class="t" style="left:1332.30px;top:779.00px;font-size:30.5px;color:#a9abbd;letter-spacing:-0.200px;-webkit-text-stroke:0.25px #a9abbd;">database<i class="u"></i>1</span>
<span class="t" style="left:1642.00px;top:779.00px;font-size:30.5px;color:#a9abbd;letter-spacing:-0.118px;-webkit-text-stroke:0.25px #a9abbd;">307022</span>
<span class="t" style="left:1880.20px;top:779.00px;font-size:30.5px;color:#a9abbd;letter-spacing:-0.120px;-webkit-text-stroke:0.25px #a9abbd;">25682</span>
<span class="t" style="left:2173.00px;top:779.00px;font-size:30.5px;color:#a9abbd;letter-spacing:-0.191px;-webkit-text-stroke:0.25px #a9abbd;">3.73 Mb</span>
<span class="t" style="left:2382.60px;top:779.00px;font-size:30.5px;color:#a9abbd;letter-spacing:-0.256px;-webkit-text-stroke:0.25px #a9abbd;">red-adqmc-adqm-2.ru-central1.internal</span>
<span class="t" style="left:561.00px;top:861.00px;font-size:30.5px;color:#00a3ff;letter-spacing:-0.054px;-webkit-text-stroke:0.25px #00a3ff;">table<i class="u"></i>1<i class="u"></i>2</span>
<span class="t" style="left:1063.00px;top:861.00px;font-size:30.5px;color:#a9abbd;letter-spacing:-0.181px;-webkit-text-stroke:0.25px #a9abbd;">94.95 Mb</span>
<span class="t" style="left:1332.30px;top:861.00px;font-size:30.5px;color:#a9abbd;letter-spacing:-0.200px;-webkit-text-stroke:0.25px #a9abbd;">database<i class="u"></i>1</span>
<span class="t" style="left:1642.00px;top:861.00px;font-size:30.5px;color:#a9abbd;letter-spacing:-0.118px;-webkit-text-stroke:0.25px #a9abbd;">306592</span>
<span class="t" style="left:1880.20px;top:861.00px;font-size:30.5px;color:#a9abbd;letter-spacing:-0.120px;-webkit-text-stroke:0.25px #a9abbd;">25678</span>
<span class="t" style="left:2173.00px;top:861.00px;font-size:30.5px;color:#a9abbd;letter-spacing:-0.191px;-webkit-text-stroke:0.25px #a9abbd;">3.78 Mb</span>
<span class="t" style="left:2382.60px;top:861.00px;font-size:30.5px;color:#a9abbd;letter-spacing:-0.256px;-webkit-text-stroke:0.25px #a9abbd;">red-adqmc-adqm-1.ru-central1.internal</span>
<span class="t" style="left:561.00px;top:943.00px;font-size:30.5px;color:#00a3ff;letter-spacing:-0.054px;-webkit-text-stroke:0.25px #00a3ff;">table<i class="u"></i>1<i class="u"></i>2</span>
<span class="t" style="left:1063.00px;top:943.00px;font-size:30.5px;color:#a9abbd;letter-spacing:-0.181px;-webkit-text-stroke:0.25px #a9abbd;">94.95 Mb</span>
<span class="t" style="left:1332.30px;top:943.00px;font-size:30.5px;color:#a9abbd;letter-spacing:-0.200px;-webkit-text-stroke:0.25px #a9abbd;">database<i class="u"></i>1</span>
<span class="t" style="left:1642.00px;top:943.00px;font-size:30.5px;color:#a9abbd;letter-spacing:-0.118px;-webkit-text-stroke:0.25px #a9abbd;">306300</span>
<span class="t" style="left:1880.20px;top:943.00px;font-size:30.5px;color:#a9abbd;letter-spacing:-0.120px;-webkit-text-stroke:0.25px #a9abbd;">25696</span>
<span class="t" style="left:2173.00px;top:943.00px;font-size:30.5px;color:#a9abbd;letter-spacing:-0.191px;-webkit-text-stroke:0.25px #a9abbd;">3.44 Mb</span>
<span class="t" style="left:2382.60px;top:943.00px;font-size:30.5px;color:#a9abbd;letter-spacing:-0.256px;-webkit-text-stroke:0.25px #a9abbd;">red-adqmc-adqm-4.ru-central1.internal</span>
<span class="t" style="left:561.00px;top:1025.00px;font-size:30.5px;color:#00a3ff;letter-spacing:-0.054px;-webkit-text-stroke:0.25px #00a3ff;">table<i class="u"></i>1<i class="u"></i>2</span>
<span class="t" style="left:1063.00px;top:1025.00px;font-size:30.5px;color:#a9abbd;letter-spacing:-0.181px;-webkit-text-stroke:0.25px #a9abbd;">94.86 Mb</span>
<span class="t" style="left:1332.30px;top:1025.00px;font-size:30.5px;color:#a9abbd;letter-spacing:-0.200px;-webkit-text-stroke:0.25px #a9abbd;">database<i class="u"></i>1</span>
<span class="t" style="left:1642.00px;top:1025.00px;font-size:30.5px;color:#a9abbd;letter-spacing:-0.118px;-webkit-text-stroke:0.25px #a9abbd;">305836</span>
<span class="t" style="left:1880.20px;top:1025.00px;font-size:30.5px;color:#a9abbd;letter-spacing:-0.120px;-webkit-text-stroke:0.25px #a9abbd;">25650</span>
<span class="t" style="left:2173.00px;top:1025.00px;font-size:30.5px;color:#a9abbd;letter-spacing:-0.191px;-webkit-text-stroke:0.25px #a9abbd;">3.52 Mb</span>
<span class="t" style="left:2382.60px;top:1025.00px;font-size:30.5px;color:#a9abbd;letter-spacing:-0.256px;-webkit-text-stroke:0.25px #a9abbd;">red-adqmc-adqm-3.ru-central1.internal</span>
<span class="t" style="left:561.00px;top:1107.00px;font-size:30.5px;color:#00a3ff;letter-spacing:-0.054px;-webkit-text-stroke:0.25px #00a3ff;">table<i class="u"></i>1<i class="u"></i>1</span>
<span class="t" style="left:1063.00px;top:1107.00px;font-size:30.5px;color:#a9abbd;letter-spacing:-0.181px;-webkit-text-stroke:0.25px #a9abbd;">17.56 Mb</span>
<span class="t" style="left:1332.30px;top:1107.00px;font-size:30.5px;color:#a9abbd;letter-spacing:-0.200px;-webkit-text-stroke:0.25px #a9abbd;">database<i class="u"></i>1</span>
<span class="t" style="left:1642.00px;top:1107.00px;font-size:30.5px;color:#a9abbd;letter-spacing:-0.118px;-webkit-text-stroke:0.25px #a9abbd;">139844</span>
<span class="t" style="left:1880.20px;top:1107.00px;font-size:30.5px;color:#a9abbd;letter-spacing:-0.120px;-webkit-text-stroke:0.25px #a9abbd;">71256</span>
<span class="t" style="left:2173.00px;top:1107.00px;font-size:30.5px;color:#a9abbd;letter-spacing:-0.191px;-webkit-text-stroke:0.25px #a9abbd;">3.35 Mb</span>
<span class="t" style="left:2382.60px;top:1107.00px;font-size:30.5px;color:#a9abbd;letter-spacing:-0.256px;-webkit-text-stroke:0.25px #a9abbd;">red-adqmc-adqm-3.ru-central1.internal</span>
<span class="t" style="left:561.00px;top:1189.00px;font-size:30.5px;color:#00a3ff;letter-spacing:-0.054px;-webkit-text-stroke:0.25px #00a3ff;">table<i class="u"></i>1<i class="u"></i>1</span>
<span class="t" style="left:1063.00px;top:1189.00px;font-size:30.5px;color:#a9abbd;letter-spacing:-0.181px;-webkit-text-stroke:0.25px #a9abbd;">18.21 Mb</span>
<span class="t" style="left:1332.30px;top:1189.00px;font-size:30.5px;color:#a9abbd;letter-spacing:-0.200px;-webkit-text-stroke:0.25px #a9abbd;">database<i class="u"></i>1</span>
<span class="t" style="left:1642.00px;top:1189.00px;font-size:30.5px;color:#a9abbd;letter-spacing:-0.118px;-webkit-text-stroke:0.25px #a9abbd;">126418</span>
<span class="t" style="left:1880.20px;top:1189.00px;font-size:30.5px;color:#a9abbd;letter-spacing:-0.120px;-webkit-text-stroke:0.25px #a9abbd;">71376</span>
<span class="t" style="left:2173.00px;top:1189.00px;font-size:30.5px;color:#a9abbd;letter-spacing:-0.402px;-webkit-text-stroke:0.25px #a9abbd;">-6.80 Mb</span>
<span class="t" style="left:2382.60px;top:1189.00px;font-size:30.5px;color:#a9abbd;letter-spacing:-0.256px;-webkit-text-stroke:0.25px #a9abbd;">red-adqmc-adqm-1.ru-central1.internal</span>
<span class="t" style="left:561.00px;top:1271.00px;font-size:30.5px;color:#00a3ff;letter-spacing:-0.054px;-webkit-text-stroke:0.25px #00a3ff;">table<i class="u"></i>1<i class="u"></i>3</span>
<span class="t" style="left:1063.00px;top:1271.00px;font-size:30.5px;color:#a9abbd;letter-spacing:-0.432px;-webkit-text-stroke:0.25px #a9abbd;">601.43 Kb</span>
<span class="t" style="left:1332.30px;top:1271.00px;font-size:30.5px;color:#a9abbd;letter-spacing:-0.200px;-webkit-text-stroke:0.25px #a9abbd;">database<i class="u"></i>1</span>
<span class="t" style="left:1642.00px;top:1271.00px;font-size:30.5px;color:#a9abbd;letter-spacing:-0.120px;-webkit-text-stroke:0.25px #a9abbd;">90125</span>
<span class="t" style="left:1880.20px;top:1271.00px;font-size:30.5px;color:#a9abbd;letter-spacing:-0.120px;-webkit-text-stroke:0.25px #a9abbd;">25427</span>
<span class="t" style="left:2173.00px;top:1271.00px;font-size:30.5px;color:#a9abbd;letter-spacing:-0.471px;-webkit-text-stroke:0.25px #a9abbd;">72.85 Kb</span>
<span class="t" style="left:2382.60px;top:1271.00px;font-size:30.5px;color:#a9abbd;letter-spacing:-0.256px;-webkit-text-stroke:0.25px #a9abbd;">red-adqmc-adqm-4.ru-central1.internal</span>
<span class="t" style="left:561.00px;top:1353.00px;font-size:30.5px;color:#00a3ff;letter-spacing:-0.054px;-webkit-text-stroke:0.25px #00a3ff;">table<i class="u"></i>1<i class="u"></i>3</span>
<span class="t" style="left:1063.00px;top:1353.00px;font-size:30.5px;color:#a9abbd;letter-spacing:-0.432px;-webkit-text-stroke:0.25px #a9abbd;">602.89 Kb</span>
<span class="t" style="left:1332.30px;top:1353.00px;font-size:30.5px;color:#a9abbd;letter-spacing:-0.200px;-webkit-text-stroke:0.25px #a9abbd;">database<i class="u"></i>1</span>
<span class="t" style="left:1642.00px;top:1353.00px;font-size:30.5px;color:#a9abbd;letter-spacing:-0.120px;-webkit-text-stroke:0.25px #a9abbd;">90033</span>
<span class="t" style="left:1880.20px;top:1353.00px;font-size:30.5px;color:#a9abbd;letter-spacing:-0.120px;-webkit-text-stroke:0.25px #a9abbd;">25399</span>
<span class="t" style="left:2173.00px;top:1353.00px;font-size:30.5px;color:#a9abbd;letter-spacing:-0.471px;-webkit-text-stroke:0.25px #a9abbd;">86.14 Kb</span>
<span class="t" style="left:2382.60px;top:1353.00px;font-size:30.5px;color:#a9abbd;letter-spacing:-0.256px;-webkit-text-stroke:0.25px #a9abbd;">red-adqmc-adqm-1.ru-central1.internal</span>
<span class="t" style="left:810.42px;top:859.00px;font-size:32px;color:#2db88a;letter-spacing:-0.117px;-webkit-text-stroke:0.25px #2db88a;">click</span>
</div></body></html>
